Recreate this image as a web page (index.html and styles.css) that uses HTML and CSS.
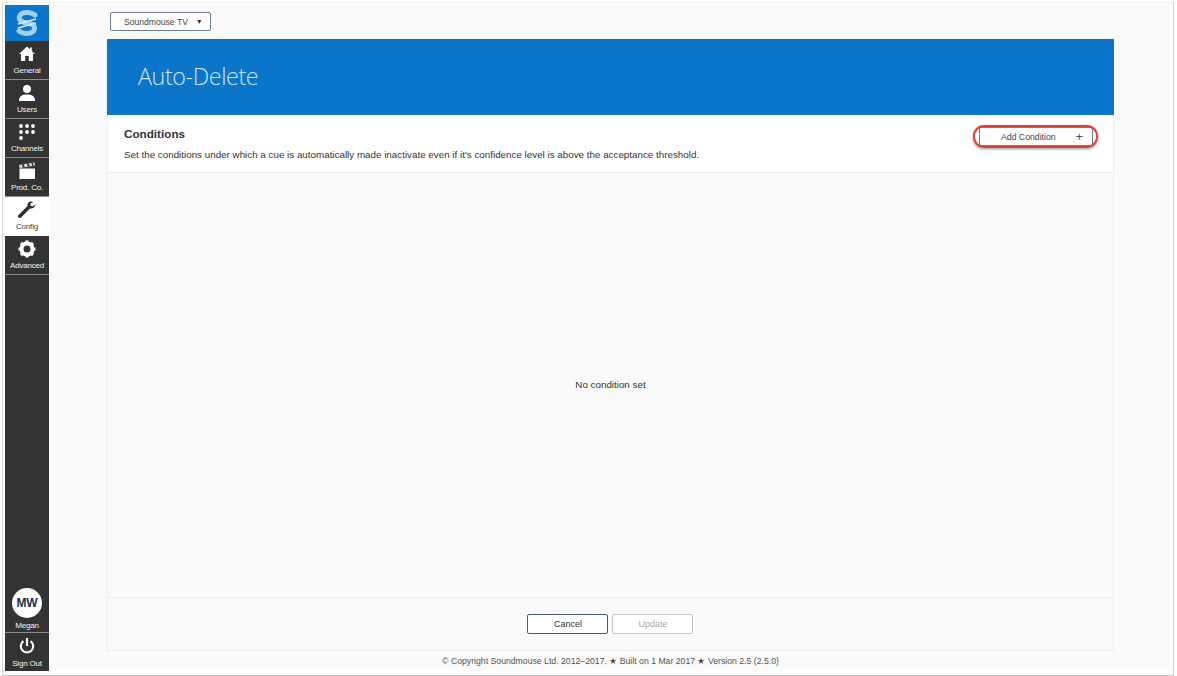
FILE: index.html
```html
<!DOCTYPE html>
<html lang="en">
<head>
<meta charset="utf-8">
<title>Auto-Delete</title>
<link rel="stylesheet" href="styles.css">
</head>
<body>
<div class="window">
  <div class="app">
    <nav class="sidebar">
      <div class="logo">
        <svg width="24" height="26" viewBox="0 0 24 26"><path d="M20 5 C15 1 6 2 4.500 6.500 C3.500 10.500 7 12 12 13 C17 14 20 15 19.500 19 C18.500 24 9 25 4 21" fill="none" stroke="#9fd0f0" stroke-width="5" stroke-linecap="round"/><path d="M3 14 L21 9 M3 18 L21 13" stroke="#d5ecfa" stroke-width="1.500"/></svg>
      </div>
      <a class="item"><svg class="ic" width="18" height="18" viewBox="0 0 18 18"><path fill="#fff" d="M9 1.500 L1 9 L3 9 L3 16 L7.200 16 L7.200 11 L10.800 11 L10.800 16 L15 16 L15 9 L17 9 L13.800 6 L13.800 2.500 L12 2.500 L12 4.300 Z"/></svg><span>General</span></a>
      <a class="item"><svg class="ic" width="20" height="18" viewBox="0 0 20 18"><circle cx="10" cy="5" r="4" fill="#fff"/><path fill="#fff" d="M2 17 C2 12 5 10.500 10 10.500 C15 10.500 18 12 18 17 Z"/></svg><span>Users</span></a>
      <a class="item"><svg class="ic" width="18" height="18" viewBox="0 0 18 18" fill="#fff"><circle cx="3" cy="3" r="1.900"/><circle cx="9" cy="3" r="1.900"/><circle cx="15" cy="3" r="1.900"/><circle cx="3" cy="9" r="1.900"/><circle cx="9" cy="9" r="1.900"/><circle cx="15" cy="9" r="1.900"/><circle cx="3" cy="15" r="1.900"/></svg><span>Channels</span></a>
      <a class="item"><svg class="ic" width="18" height="18" viewBox="0 0 18 18"><path fill="#fff" d="M1.500 6.500 H17 V17 H1.500 Z"/><path fill="#ddd" d="M1 3 L16.500 0.500 L17 3.500 L1.500 6 Z"/><path fill="#333" d="M4 2.600 l2-.3 .6 2.800 -2 .3 Z M9 1.800 l2-.3 .6 2.800 -2 .3 Z M13.500 1.100 l1.500-.2 .6 2.800 -1.500 .2 Z"/></svg><span>Prod. Co.</span></a>
      <a class="item active"><svg class="ic" width="20" height="18" viewBox="0 0 20 18"><path fill="#2f2f2f" d="M14 0.500 C11.500 0.500 10 2.500 10.500 5 L1.500 14 C0.500 15 1 16 1.500 16.500 C2 17 3 17.500 4 16.500 L13 7.500 C15.500 8 18 6.500 18.500 3.500 L15.500 5.500 L13.500 4.500 L13.500 2.500 L16.500 1 C15.800 0.700 15 0.500 14 0.500 Z"/></svg><span>Config</span></a>
      <a class="item"><svg class="ic" width="18" height="18" viewBox="0 0 18 18"><circle cx="9" cy="9" r="5.500" fill="none" stroke="#fff" stroke-width="4"/><path stroke="#fff" stroke-width="3.200" d="M9 0.500 V3.500 M9 14.500 V17.500 M0.500 9 H3.500 M14.500 9 H17.500 M3 3 L5 5 M13 13 L15 15 M15 3 L13 5 M5 13 L3 15"/></svg><span>Advanced</span></a>
      <div class="spacer"></div>
      <a class="item user"><div class="avatar">MW</div><span>Megan</span></a>
      <a class="item signout"><svg class="ic" width="16" height="18" viewBox="0 0 18 20"><path d="M5 4.500 A7 7 0 1 0 13 4.500" fill="none" stroke="#fff" stroke-width="2.400"/><path d="M9 1 V10" stroke="#fff" stroke-width="2.400"/></svg><span>Sign Out</span></a>
    </nav>
    <main class="main">
      <div class="topbar"><button class="select">Soundmouse TV<i class="arrow">▼</i></button></div>
      <section class="panel">
        <header class="banner"><h1>Auto-Delete</h1></header>
        <div class="conditions">
          <div class="cond-text">
            <h2>Conditions</h2>
            <p>Set the conditions under which a cue is automatically made inactivate even if it's confidence level is above the acceptance threshold.</p>
          </div>
          <div class="add-wrap">
            <button class="add"><span>Add Condition</span><i>+</i></button>
            <div class="ring"></div>
          </div>
        </div>
        <div class="empty">No condition set</div>
        <div class="actions">
          <button class="btn primary">Cancel</button>
          <button class="btn disabled">Update</button>
        </div>
      </section>
      <footer class="foot">© Copyright Soundmouse Ltd. 2012–2017. ★ Built on 1 Mar 2017 ★ Version 2.5 (2.5.0)</footer>
    </main>
  </div>
</div>
</body>
</html>
```
FILE: styles.css
```css
* { box-sizing: border-box; }
html, body { margin: 0; height: 100%; overflow: hidden; }
body {
  background: #fff;
  font-family: "Liberation Sans", Arial, sans-serif;
  color: #2e3440;
  padding: 2px 3px 0 2px;
}
.window {
  height: 674px;
  background: #fff;
  border-top: 1px solid #f2f2f2;
  border-left: 1px solid #dcdcdc;
  border-right: 1px solid #d0d0d0;
  border-bottom: 1px solid #c4c4c4;
  padding: 2px 3px 4px 2px;
}
.app { display: flex; height: 100%; background: #fafafa; }
.sidebar {
  width: 44px;
  flex: none;
  height: 666px;
  background: #333;
  display: flex;
  flex-direction: column;
}
.logo {
  height: 36px;
  flex: none;
  background: #0b75c9;
  display: flex;
  align-items: center;
  justify-content: center;
}
.item {
  height: 39px;
  flex: none;
  display: flex;
  flex-direction: column;
  align-items: center;
  padding-top: 3px;
  border-bottom: 1px solid #8c8c8c;
  color: #f2f2f2;
  font-size: 8px;
  letter-spacing: -0.200px;
  line-height: 10px;
}
.item .ic { height: 20px; display: block; margin-bottom: 2px; }
.item.active { background: #fff; color: #444; border-bottom-color: #fff; }
.spacer { flex: 1; }
.item.user { height: 48px; padding-top: 3px; }
.item.signout { border-bottom: 0; height: 38px; padding-top: 3px; }
.item.signout .ic { margin-bottom: 3px; }
.avatar {
  width: 30px;
  height: 30px;
  border-radius: 50%;
  background: #fff;
  color: #26324a;
  font-size: 12px;
  font-weight: 700;
  display: flex;
  align-items: center;
  justify-content: center;
  margin-bottom: 3px;
}
.main {
  flex: 1;
  min-width: 0;
  display: flex;
  flex-direction: column;
  padding: 0 56px 0 58px;
}
.topbar { height: 34px; flex: none; padding: 7px 0 0 3px; }
.select {
  width: 101px;
  height: 19px;
  background: #fff;
  border: 1px solid #6f7c94;
  border-radius: 2px;
  font: 8.600px "Liberation Sans", Arial, sans-serif;
  color: #444;
  padding: 0 0 0 13px;
  display: flex;
  align-items: center;
}
.arrow { font-style: normal; font-size: 7px; margin-left: 8px; color: #333; }
.panel {
  height: 612px;
  flex: none;
  display: flex;
  flex-direction: column;
  border: 1px solid #eee;
  border-top: 0;
}
.banner {
  height: 76px;
  flex: none;
  margin: 0 -1px;
  background: #0b75c9;
  display: flex;
  align-items: center;
  padding: 0 0 2px 31px;
}
.banner h1 {
  margin: 0;
  font-family: "Open Sans", "Liberation Sans", sans-serif;
  font-weight: 300;
  font-size: 23.300px;
  letter-spacing: -0.400px;
  color: #cfe5f7;
}
.conditions {
  height: 58px;
  flex: none;
  background: #fff;
  border-bottom: 1px solid #eee;
  display: flex;
  justify-content: space-between;
  padding: 12px 20px 0 16px;
}
.conditions h2 { margin: 0 0 8px; font-size: 11.700px; line-height: 14px; font-weight: 700; color: #2e3440; }
.conditions p { margin: 0; font-size: 9.820px; line-height: 12px; color: #333; }
.add-wrap { position: relative; width: 114px; height: 20px; }
.add {
  width: 100%;
  height: 19px;
  background: #fff;
  border: 1px solid #6f7c94;
  border-radius: 2px;
  font: 8.700px "Liberation Sans", Arial, sans-serif;
  color: #444;
  display: flex;
  align-items: center;
  justify-content: space-between;
  padding: 0 9px 0 21px;
}
.add i { font-style: normal; font-size: 13px; color: #555; }
.ring {
  position: absolute;
  left: -6px;
  top: -2px;
  width: 125px;
  height: 23px;
  border: 2px solid #d9453b;
  border-radius: 11px;
  box-shadow: 0 1px 3px rgba(0,0,0,.45);
}
.empty {
  flex: 1;
  display: flex;
  align-items: center;
  justify-content: center;
  font-size: 9.800px;
  color: #333;
  border-bottom: 1px solid #eee;
  padding-bottom: 2px;
}
.actions {
  height: 52px;
  flex: none;
  display: flex;
  justify-content: center;
  gap: 4px;
  padding: 16px 2px 0 0;
}
.btn {
  width: 81px;
  height: 20px;
  background: #fff;
  border-radius: 2px;
  padding-left: 8px;
  font: 9px "Liberation Sans", Arial, sans-serif;
}
.btn.primary { border: 1px solid #4a5a78; color: #333; }
.btn.disabled { border: 1px solid #c8c8c8; color: #aaa; }
.foot {
  text-align: center;
  font-size: 8.700px;
  line-height: 12px;
  padding-top: 4px;
  color: #555;
}
```
